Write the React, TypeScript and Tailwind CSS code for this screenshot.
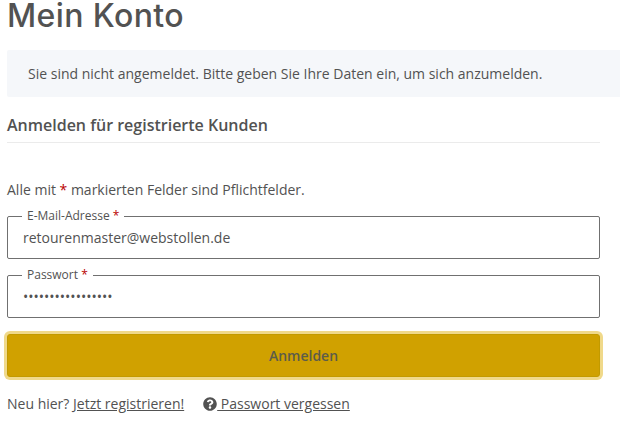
const sans = "font-['Open_Sans',sans-serif]";

function Req() {
  return <span className="text-[#b90000]">*</span>;
}

function Field({ label, value }: { label: string; value: string }) {
  return (
    <fieldset className="h-[50px] rounded-[2px] border border-[#707070] pl-[15px] pr-[15px]">
      <legend className="ml-[-1px] px-[5px] text-[12px] leading-[14px] text-[#525252]">
        {label} <Req />
      </legend>
      <div className="mt-[2px] text-[14px] leading-[26px] text-[#525252]">{value}</div>
    </fieldset>
  );
}

export default function App() {
  return (
    <div className={`${sans} h-[425px] w-[620px] bg-white pl-[7px] pr-[20px] text-[14px] text-[#525252]`}>
      <h1 className="font-['Inter',sans-serif] text-[32px] font-[550] leading-[32px] tracking-[0.4px] text-[#525252]">
        Mein Konto
      </h1>
      <div className="mr-[-20px] mt-[18px] flex h-[47px] items-center rounded-l-[2px] bg-[#f5f7fa] pl-[21px]">
        Sie sind nicht angemeldet. Bitte geben Sie Ihre Daten ein, um sich anzumelden.
      </div>
      <h2 className="mt-[17px] border-b border-[#ebebeb] pb-[6px] text-[16px] font-semibold leading-[22px]">
        Anmelden für registrierte Kunden
      </h2>
      <p className="mt-[37px] leading-[20px]">
        Alle mit <Req /> markierten Felder sind Pflichtfelder.
      </p>
      <div className="mt-[9px] flex flex-col gap-[9px]">
        <Field label="E-Mail-Adresse" value="retourenmaster@webstollen.de" />
        <Field label="Passwort" value="•••••••••••••••••" />
      </div>
      <button className="mt-[16px] flex h-[43px] w-[593px] items-center justify-center rounded-[3px] border border-[#c29a00] bg-[#d0a100] text-[14px] font-semibold text-[#5c5c4a] shadow-[0_0_0_3px_#f0d98a]">
        Anmelden
      </button>
      <div className="mt-[17px] flex items-center leading-[20px]">
        <span>
          Neu hier? <a className="underline">Jetzt registrieren!</a>
        </span>
        <a className="ml-[19px] flex items-center underline">
          <svg viewBox="0 0 512 512" className="h-[14px] w-[14px] fill-[#525252]">
            <path d="M504 256c0 137-111 248-248 248S8 393 8 256 119 8 256 8s248 111 248 248zM262.7 90c-54.500 0-89.300 23-116.500 63.800-3.500 5.300-2.400 12.400 2.700 16.300l34.700 26.300c5.200 3.900 12.600 3 16.700-2.100 17.900-22.700 30.100-35.800 57.300-35.800 20.400 0 45.700 13.100 45.700 33 0 15-12.400 22.700-32.600 34-23.600 13.200-54.800 29.700-54.800 70.900V302c0 6.600 5.400 12 12 12h56c6.600 0 12-5.400 12-12v-1.300c0-28.600 83.500-29.800 83.500-107.100C378.400 135.400 318 90 262.700 90zM256 339c-25.500 0-46.200 20.700-46.200 46.200 0 25.500 20.700 46.200 46.200 46.200s46.200-20.700 46.200-46.200c0-25.500-20.700-46.200-46.200-46.200z" />
          </svg>
          <span className="whitespace-pre"> Passwort vergessen</span>
        </a>
      </div>
    </div>
  );
}
